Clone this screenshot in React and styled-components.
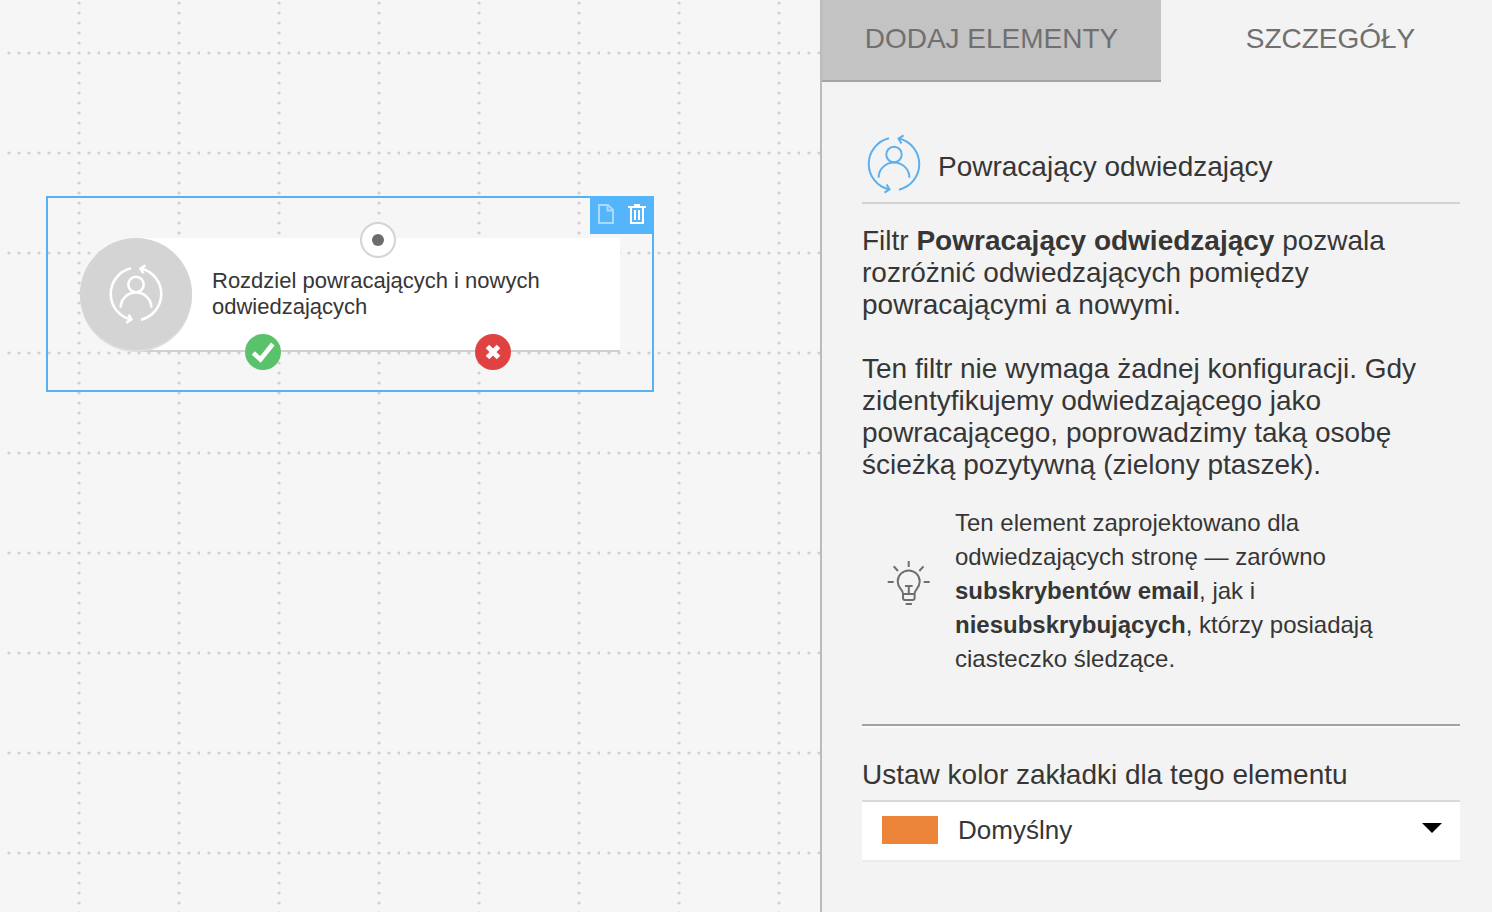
import React, { useState } from "react";
import styled, { createGlobalStyle } from "styled-components";

const GlobalStyle = createGlobalStyle`
  *, *::before, *::after { box-sizing: border-box; }
  html, body, #root { height: 100%; }
  body {
    margin: 0;
    background: #f3f3f3;
    color: #363636;
    font-family: "Liberation Sans", Arial, Helvetica, sans-serif;
  }
  button, select { font-family: inherit; }
`;

const Page = styled.div`
  display: flex;
  min-height: 100%;
`;

const Canvas = styled.main`
  position: relative;
  flex: 1;
  min-width: 0;
  overflow: hidden;
  background: #f6f6f6;
`;

const GridLayer = styled.svg`
  position: absolute;
  inset: 0;
  width: 100%;
  height: 100%;
`;

const Node = styled.section`
  position: absolute;
  left: 46px;
  top: 196px;
  width: 608px;
  height: 196px;
  padding: 40px 32px;
  border: 2px solid #56b2f4;
`;

const NodeActions = styled.div`
  position: absolute;
  top: -2px;
  right: -2px;
  display: flex;
  background: #55b5fb;
`;

const ActionButton = styled.button`
  display: grid;
  place-items: center;
  width: 32px;
  height: 38px;
  padding: 0 0 2px;
  border: 0;
  background: none;
  color: #fff;
  opacity: ${(p) => (p.$dimmed ? 0.5 : 1)};
`;

const NodeBody = styled.div`
  display: flex;
  align-items: flex-start;
`;

const NodeBadge = styled.div`
  position: relative;
  z-index: 1;
  display: grid;
  place-items: center;
  flex: none;
  width: 112px;
  height: 112px;
  border-radius: 50%;
  background: #d4d4d4;
  box-shadow: 0 2px 0 #dedede;
  color: #fff;
`;

const NodeCard = styled.div`
  position: relative;
  display: flex;
  align-items: center;
  flex: 1;
  height: 114px;
  margin-left: -56px;
  padding-left: 76px;
  border-bottom: 2px solid #d0d0d0;
  background: #fff;
`;

const NodeText = styled.p`
  margin: 0;
  padding-right: 60px;
  font-size: 22px;
  line-height: 26px;
`;

const Port = styled.span`
  position: absolute;
  top: ${(p) => (p.$edge === "top" ? "2px" : "114px")};
  left: calc(50% + ${(p) => p.$shift || 0}px);
  display: grid;
  place-items: center;
  width: 36px;
  height: 36px;
  margin: -18px 0 0 -18px;
  border: ${(p) => (p.$outlined ? "2px solid #d4d4d4" : "0")};
  border-radius: 50%;
  background: ${(p) => p.$color};
`;

const PortDot = styled.span`
  width: 12px;
  height: 12px;
  border-radius: 50%;
  background: #6c6c6c;
`;

const Panel = styled.aside`
  flex: none;
  width: 672px;
  max-width: 60%;
  border-left: 2px solid #bbb;
  background: #f3f3f3;
`;

const Tabs = styled.div`
  display: flex;
  overflow: hidden;
`;

const Tab = styled.button`
  flex: none;
  width: 339px;
  height: 82px;
  padding: 0 0 2px;
  border: 0;
  border-bottom: 2px solid ${(p) => (p.$active ? "transparent" : "#a3a3a3")};
  background: ${(p) => (p.$active ? "transparent" : "#c3c3c3")};
  color: #707070;
  font-size: 28px;
  line-height: 32px;
`;

const Details = styled.div`
  padding: 52px 32px 40px 40px;
  font-size: 28px;
  line-height: 32px;
`;

const DetailsHeader = styled.header`
  display: flex;
  align-items: center;
  gap: 14px;
  padding: 0 0 8px 2px;
  border-bottom: 2px solid #d2d2d2;
`;

const HeaderIcon = styled.span`
  display: flex;
  color: #5cb0ee;
`;

const Title = styled.h2`
  margin: 6px 0 0;
  font-size: 28px;
  line-height: 32px;
  font-weight: 400;
`;

const Description = styled.div`
  padding-top: 21px;
`;

const Paragraph = styled.p`
  margin: 0 0 32px;
`;

const Tip = styled.div`
  display: flex;
  align-items: center;
  gap: 22px;
  margin-top: -7px;
  padding: 0 32px 0 23px;
  font-size: 24px;
  line-height: 34px;

  svg {
    flex: none;
    margin-bottom: 16px;
  }
  p { margin: 0; }
`;

const Divider = styled.hr`
  height: 4px;
  margin: 48px 0 31px;
  border: 0;
  border-top: 2px solid #a3a3a3;
  background: #fafafa;
`;

const FieldLabel = styled.label`
  display: block;
  margin-bottom: 9px;
`;

const SelectBox = styled.div`
  position: relative;
  border-top: 2px solid #d9d9d9;
  box-shadow: 0 2px 0 #ececec;
  background: #fff;
`;

const ColorSelect = styled.select`
  display: block;
  appearance: none;
  width: 100%;
  height: 58px;
  padding: 0 60px 2px 96px;
  border: 0;
  border-radius: 0;
  background: transparent;
  color: #363636;
  font-size: 26px;
  line-height: 32px;
`;

const Swatch = styled.span`
  position: absolute;
  top: 14px;
  left: 20px;
  width: 56px;
  height: 28px;
  background: ${(p) => p.$color};
  pointer-events: none;
`;

const Caret = styled.svg`
  position: absolute;
  top: 21px;
  right: 18px;
  pointer-events: none;
`;

function DottedGrid() {
  const steps = [3, 13, 23, 33, 43, 53, 63, 73, 83, 93];
  return (
    <GridLayer aria-hidden="true">
      <defs>
        <pattern id="dots" width="100" height="100" patternUnits="userSpaceOnUse">
          <g fill="#d0d0d0">
            {steps.map((s) => (
              <circle key={"v" + s} cx="79" cy={s} r="1.6" />
            ))}
            {steps
              .filter((s) => s !== 73)
              .map((s) => (
                <circle key={"h" + s} cx={s + 6} cy="53" r="1.6" />
              ))}
          </g>
        </pattern>
      </defs>
      <rect width="100%" height="100%" fill="url(#dots)" />
    </GridLayer>
  );
}

function ReturningVisitorIcon({ stroke = 2 }) {
  return (
    <svg width="60" height="60" viewBox="0 0 60 60" fill="none" stroke="currentColor" strokeWidth={stroke} aria-hidden="true">
      <path d="M25 4.3A26.3 26.3 0 0 0 25 55.5" />
      <path d="M22.6 50.6L25.5 55.4L20.4 58.7" />
      <path d="M35 55.7A26.3 26.3 0 0 0 35 4.5" />
      <path d="M37.4 9.4L34.5 4.6L39.6 1.3" />
      <circle cx="30" cy="20.5" r="7.7" />
      <path d="M14.6 43.8A15.4 15.4 0 0 1 45.4 43.8" />
    </svg>
  );
}

function PageIcon() {
  return (
    <svg width="18" height="22" viewBox="0 0 18 22" fill="none" stroke="currentColor" strokeWidth="2" aria-hidden="true">
      <path d="M2 2H11L16 7V20H2Z" />
      <path d="M10.5 2V7.5H16" />
    </svg>
  );
}

function TrashIcon() {
  return (
    <svg width="20" height="22" viewBox="0 0 20 22" fill="none" stroke="currentColor" strokeWidth="2" aria-hidden="true">
      <path d="M0 4H18M6 2H12" />
      <path d="M3 4V20H15V4" />
      <path d="M7 7V17M11 7V17" />
    </svg>
  );
}

function CheckIcon() {
  return (
    <svg width="26" height="24" viewBox="0 0 26 24" fill="none" stroke="#fff" strokeWidth="4.6" aria-hidden="true">
      <path d="M3.3 13L10.5 19.4L22.8 4" />
    </svg>
  );
}

function CrossIcon() {
  return (
    <svg width="16" height="16" viewBox="0 0 16 16" fill="none" stroke="#fff" strokeWidth="5" aria-hidden="true">
      <path d="M2.5 2.5L13.5 13.5M13.5 2.5L2.5 13.5" />
    </svg>
  );
}

function BulbIcon() {
  return (
    <svg width="48" height="50" viewBox="0 0 48 50" fill="none" stroke="#6f6f6f" strokeWidth="2" aria-hidden="true">
      <path d="M23.7 3V9M38.5 8.3L34.3 13M8.7 8.3L13 13M2.7 24H8.7M38.7 24H44.7" />
      <path d="M18 40V35.5C18 31.5 12.7 30 12.7 23.4A11 11 0 0 1 34.7 23.4C34.7 30 29.6 31.5 29.6 35.5V40Q29.6 42 27.6 42H20Q18 42 18 40Z" />
      <path d="M20 28H27.6M23.8 28V36M18 36H29.6M20.7 46H26.9" />
    </svg>
  );
}

export default function App() {
  const [tab, setTab] = useState("details");
  return (
    <>
      <GlobalStyle />
      <Page>
        <Canvas>
          <DottedGrid />
          <Node>
            <NodeBody>
              <NodeBadge>
                <ReturningVisitorIcon stroke={2.6} />
              </NodeBadge>
              <NodeCard>
                <NodeText>Rozdziel powracających i nowych odwiedzających</NodeText>
                <Port $edge="top" $color="#fff" $outlined>
                  <PortDot />
                </Port>
                <Port $edge="bottom" $shift={-115} $color="#59c26b">
                  <CheckIcon />
                </Port>
                <Port $edge="bottom" $shift={115} $color="#e04141">
                  <CrossIcon />
                </Port>
              </NodeCard>
            </NodeBody>
            <NodeActions>
              <ActionButton type="button" aria-label="Kopiuj" $dimmed>
                <PageIcon />
              </ActionButton>
              <ActionButton type="button" aria-label="Usuń">
                <TrashIcon />
              </ActionButton>
            </NodeActions>
          </Node>
        </Canvas>
        <Panel>
          <Tabs role="tablist">
            <Tab type="button" role="tab" aria-selected={tab === "add"} $active={tab === "add"} onClick={() => setTab("add")}>
              DODAJ ELEMENTY
            </Tab>
            <Tab type="button" role="tab" aria-selected={tab === "details"} $active={tab === "details"} onClick={() => setTab("details")}>
              SZCZEGÓŁY
            </Tab>
          </Tabs>
          <Details>
            <DetailsHeader>
              <HeaderIcon>
                <ReturningVisitorIcon />
              </HeaderIcon>
              <Title>Powracający odwiedzający</Title>
            </DetailsHeader>
            <Description>
              <Paragraph>
                Filtr <b>Powracający odwiedzający</b> pozwala rozróżnić odwiedzających pomiędzy powracającymi a nowymi.
              </Paragraph>
              <Paragraph>
                Ten filtr nie wymaga żadnej konfiguracji. Gdy zidentyfikujemy odwiedzającego jako powracającego, poprowadzimy taką osobę ścieżką pozytywną (zielony ptaszek).
              </Paragraph>
            </Description>
            <Tip>
              <BulbIcon />
              <p>
                Ten element zaprojektowano dla odwiedzających stronę — zarówno <b>subskrybentów email</b>, jak i <b>niesubskrybujących</b>, którzy posiadają ciasteczko śledzące.
              </p>
            </Tip>
            <Divider />
            <FieldLabel htmlFor="tab-color">Ustaw kolor zakładki dla tego elementu</FieldLabel>
            <SelectBox>
              <Swatch $color="#ec843a" />
              <ColorSelect id="tab-color" defaultValue="default">
                <option value="default">Domyślny</option>
              </ColorSelect>
              <Caret width="20" height="10" viewBox="0 0 20 10" aria-hidden="true">
                <path d="M0 0H20L10 10Z" fill="#000" />
              </Caret>
            </SelectBox>
          </Details>
        </Panel>
      </Page>
    </>
  );
}
